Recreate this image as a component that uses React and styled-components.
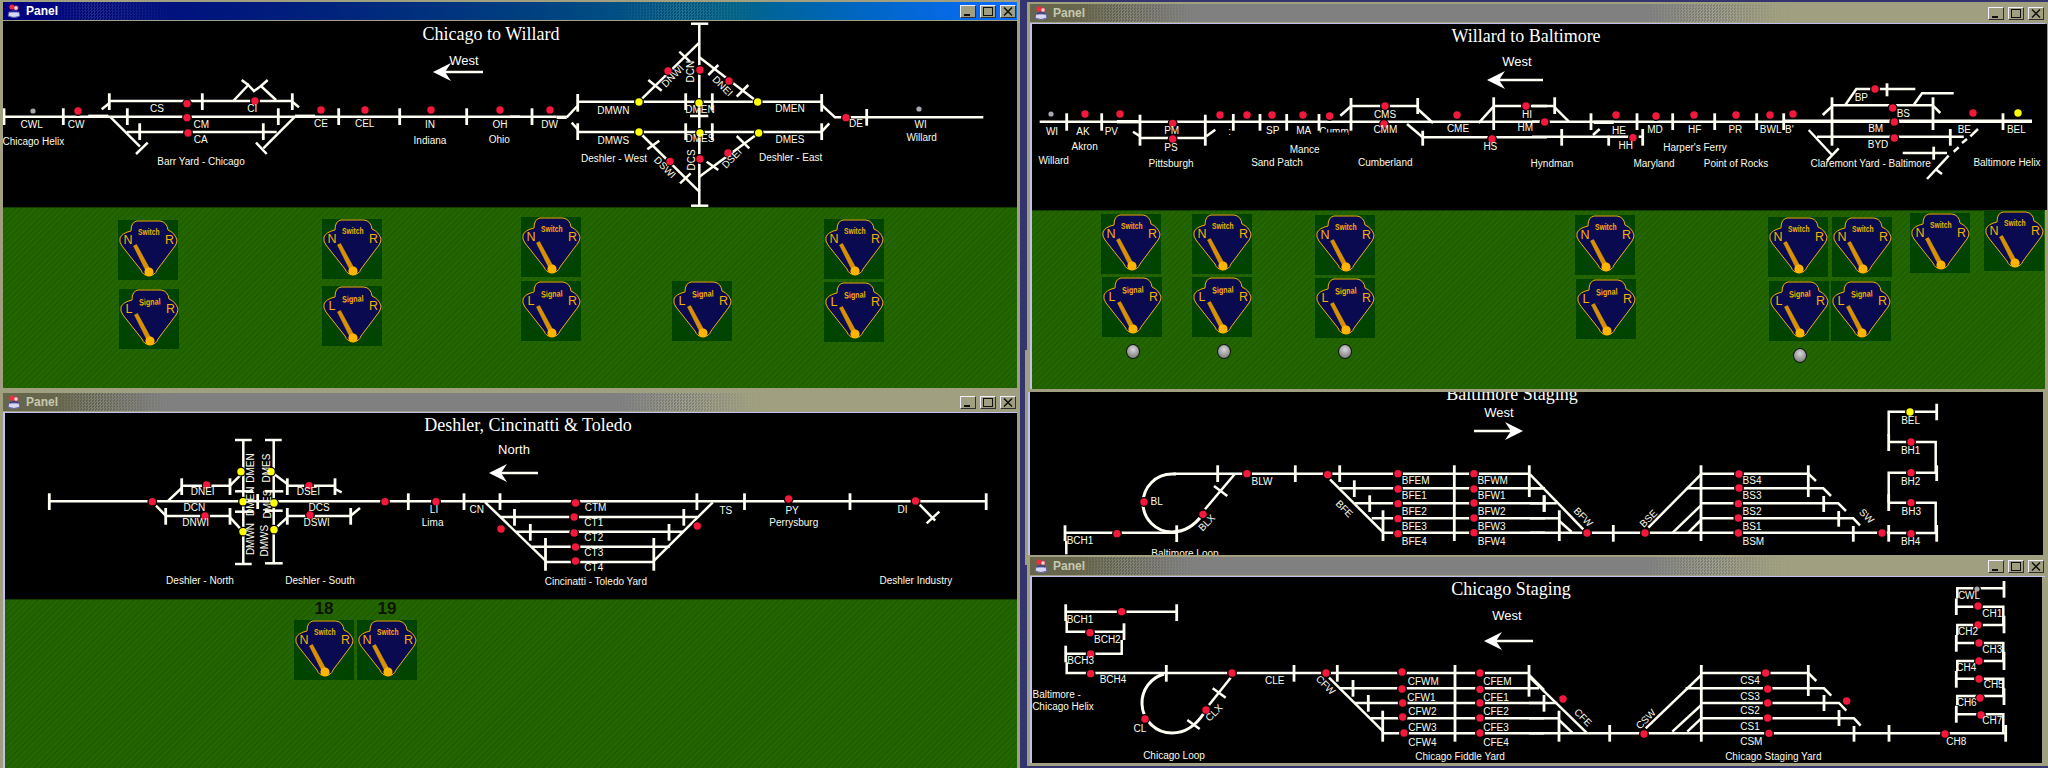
import React from 'react'
import styled, { createGlobalStyle } from 'styled-components'

const GlobalStyle = createGlobalStyle`
  html, body { margin: 0; padding: 0; background: #34346e; overflow: hidden; }
  #root { width: 2048px; height: 768px; }
`

const Desktop = styled.div`
  position: relative;
  width: 2048px;
  height: 768px;
  overflow: hidden;
  font-family: "Liberation Sans", Arial, sans-serif;
`

const Win = styled.section`
  position: absolute;
  left: ${p => p.$x}px;
  top: ${p => p.$y}px;
  width: ${p => p.$w}px;
  height: ${p => p.$h}px;
  z-index: ${p => p.$z};
  box-sizing: border-box;
  display: flex;
  flex-direction: column;
  background: #a0a080;
  border-style: solid;
  border-color: #a0a080;
  border-width: 2px 3px 3px 3px;
`

const TitleBar = styled.header`
  position: relative;
  flex: 0 0 18px;
  display: flex;
  align-items: center;
  gap: 4px;
  padding: 0 1px 0 3px;
  margin-bottom: 1px;
  font-size: 12px;
  font-weight: 700;
  color: ${p => (p.$active ? '#ffffff' : '#c8c8b0')};
  background: ${p => p.$active
    ? 'linear-gradient(90deg, #000080 0%, #00207c 30%, #004080 52%, #006488 72%, #0066c0 84%, #0a6cff 100%)'
    : 'linear-gradient(90deg, #66664c 0%, #66664c 5%, #808080 16%, #808080 61%, #a0a080 74%)'};

  /* the dithered bands of the old window manager */
  &::before {
    content: '';
    position: absolute;
    inset: 0;
    background: repeating-conic-gradient(rgba(255, 255, 255, 0.13) 0 25%, rgba(0, 0, 0, 0.13) 0 50%) 0 0 / 3px 3px;
    mask-image: linear-gradient(90deg, transparent 4%, #000 9%, transparent 17%, transparent 60%, #000 67%, transparent 75%);
  }

  & > * {
    position: relative;
  }
`

const TitleText = styled.span`
  flex: 1;
`

const WinButton = styled.button`
  width: 16px;
  height: 13px;
  padding: 0;
  display: flex;
  align-items: center;
  justify-content: center;
  box-sizing: border-box;
  background: #a0a080;
  border: 1px solid;
  border-color: #f0f0ff #303030 #303030 #f0f0ff;
`

const Body = styled.div`
  flex: 1;
  min-height: 0;
  display: flex;
  flex-direction: column;
  border-left: ${p => (p.$active ? 0 : 2)}px solid #c0c0f0;
  border-top: ${p => (p.$active ? 0 : 1)}px solid #c0c0f0;
`

const Canvas = styled.svg`
  display: block;
  flex: 0 0 auto;
  background: #000000;
`

const Field = styled.div`
  position: relative;
  flex: 1;
  min-height: 0;
  border-top: 1px solid #104000;
  background: repeating-linear-gradient(-45deg, #246600 0 2px, #1f5f00 2px 4px);
`

const LeverBox = styled.div`
  position: absolute;
  left: ${p => p.$x}px;
  top: ${p => p.$y}px;
  width: 60px;
  height: 60px;
  background: #004400;
`

const LeverTag = styled.span`
  position: absolute;
  left: 0;
  right: 0;
  top: -21px;
  text-align: center;
  font-size: 17px;
  font-weight: 700;
  color: #0c1400;
`

const Ball = styled.div`
  position: absolute;
  left: ${p => p.$x}px;
  top: ${p => p.$y}px;
  width: 14px;
  height: 15px;
  box-sizing: border-box;
  border-radius: 50%;
  border: 1px solid #101810;
  background: radial-gradient(circle at 50% 35%, #d8d8e0 0%, #9a9a9a 55%, #70706a 100%);
`

const LeverWord = styled.text`
  font-family: "Liberation Sans", Arial, sans-serif;
  font-weight: 700;
  font-size: 9px;
  fill: #f4b000;
`

const LeverLetter = styled.text`
  font-family: "Liberation Sans", Arial, sans-serif;
  font-size: 12.5px;
  fill: #f4b000;
`

const TrackLabel = styled.text`
  font-family: "Liberation Sans", Arial, sans-serif;
  font-size: 10px;
  fill: #fbfbea;
  text-anchor: middle;
`

const PanelTitle = styled.text`
  font-family: "Liberation Serif", "Times New Roman", serif;
  font-size: 18px;
  fill: #ffffff;
  text-anchor: middle;
`

const Direction = styled.text`
  font-family: "Liberation Sans", Arial, sans-serif;
  font-size: 13px;
  fill: #ffffff;
  text-anchor: middle;
`

const Track = styled.polyline`
  fill: none;
  stroke: #fffff4;
  stroke-width: ${p => p.$w};
`

const Curve = styled.path`
  fill: none;
  stroke: #fffff4;
  stroke-width: 3;
`

const Dot = styled.circle`
  fill: ${p => p.$c};
  stroke: #000000;
  stroke-width: 2.5;
  paint-order: stroke;
`

const dotColors = { y: '#ffff00', g: '#a8a8b0' }

// each section keeps the coordinates as read from one crop of the reference
const sections = {
  chicago: [
    {
      o: [0, 0],
      lines: [
        [10, 350, 1560, 350], [330, 303, 875, 303], [380, 396, 830, 396],
        [330, 350, 420, 440], [408, 462, 443, 428], [885, 350, 790, 445], [768, 428, 800, 462],
        [305, 328, 328, 310], [877, 305, 897, 322],
        [700, 303, 745, 255, 762, 273, 783, 258, 828, 300], [725, 240, 745, 255], [783, 258, 803, 240],
      ],
      heavy: [[265, 349, 325, 349], [885, 349, 945, 349]],
      ticks: [
        [12, 325, 375], [190, 325, 375], [328, 280, 330], [382, 325, 375], [419, 370, 420], [607, 280, 330],
        [835, 325, 375], [790, 370, 420], [877, 280, 330], [1016, 325, 375], [1199, 325, 375], [1400, 325, 375],
      ],
      dots: [
        [99, 333, 'g'], [234, 333], [561, 311], [765, 303], [561, 353], [564, 399],
        [963, 330], [1095, 330], [1293, 330], [1500, 330],
      ],
      labels: [
        ['CS', 471, 325], ['CM', 604, 373], ['CA', 602, 417], ['CI', 757, 325], ['CWL', 95, 373], ['CW', 228, 373],
        ['Chicago Helix', 100, 425], ['Barr Yard - Chicago', 603, 484], ['CE', 963, 371], ['CEL', 1094, 370],
        ['IN', 1290, 372], ['Indiana', 1290, 422], ['OH', 1500, 372], ['Ohio', 1498, 418],
      ],
    },
    {
      o: [510, 0],
      lines: [
        [0, 350, 140, 350], [170, 352, 205, 315], [203, 305, 935, 305], [203, 396, 935, 396], [185, 368, 205, 390],
        [935, 315, 975, 352, 1420, 352], [935, 395, 958, 370],
        [568, 70, 568, 617], [543, 71, 595, 71], [543, 617, 595, 617], [540, 348, 595, 348],
        [568, 128, 387, 305], [508, 155, 540, 185], [415, 240, 455, 272],
        [568, 172, 743, 306], [595, 225, 625, 195], [680, 290, 715, 255],
        [387, 396, 568, 575], [412, 448, 448, 422], [510, 550, 542, 520],
        [568, 530, 746, 399], [590, 485, 625, 510], [680, 408, 718, 445],
      ],
      heavy: [[140, 352, 170, 352]],
      ticks: [
        [66, 325, 375], [203, 282, 335], [203, 370, 420], [527, 280, 330], [607, 280, 330], [527, 370, 420],
        [607, 370, 420], [935, 282, 335], [935, 370, 420], [1070, 327, 377],
      ],
      dots: [
        [120, 330], [474, 213], [570, 210], [657, 243], [480, 484], [570, 477], [654, 459], [1008, 353],
        [387, 306, 'y'], [567, 309, 'y'], [743, 306, 'y'], [387, 396, 'y'], [570, 399, 'y'], [746, 399, 'y'],
        [1227, 327, 'g'],
      ],
      labels: [
        ['DW', 119, 373], ['DMWN', 310, 330], ['DMEN', 840, 326], ['DMWS', 310, 421], ['DMES', 840, 419],
        ['DMEN', 570, 328], ['DMES', 570, 416], ['Deshler - West', 312, 476], ['Deshler - East', 842, 472],
        ['WI', 1232, 373], ['Willard', 1235, 413], ['DE', 1038, 371],
        ['DNWI', 488, 228, -45], ['DCN', 543, 215, -90], ['DNEI', 638, 258, 45], ['DCS', 543, 480, -90],
        ['DSWI', 465, 502, 45], ['DSEI', 665, 475, -45],
      ],
    },
  ],
  willard: [
    {
      o: [1025, 0],
      lines: [
        [38, 368, 1560, 368], [339, 417, 535, 417], [318, 398, 339, 412], [538, 412, 565, 392],
        [972, 321, 1172, 321], [940, 350, 972, 322], [1172, 330, 1218, 372], [1140, 375, 1187, 415],
        [1187, 415, 1560, 415], [1400, 321, 1560, 321], [1355, 372, 1400, 322],
      ],
      heavy: [[270, 368, 335, 368]],
      ticks: [
        [119, 343, 395], [224, 343, 395], [339, 347, 440], [535, 347, 440], [619, 345, 395], [699, 345, 395],
        [779, 345, 395], [876, 345, 395], [972, 297, 395], [1172, 297, 345], [1187, 395, 440], [1400, 295, 393],
      ],
      dots: [
        [72, 345, 'g'], [174, 345], [279, 345], [437, 373], [437, 420], [579, 348], [660, 348], [735, 348], [828, 348],
        [908, 351], [1074, 321], [1071, 375], [1290, 348], [1497, 321], [1553, 369], [1395, 420],
      ],
      labels: [
        ['WI', 75, 398], ['AK', 168, 397], ['PV', 253, 397], ['Akron', 173, 443], ['Willard', 80, 485],
        ['PM', 434, 395], ['PS', 432, 444], ['Pittsburgh', 432, 492], [':', 608, 397], ['SP', 737, 393], ['MA', 830, 393],
        ['Mance', 833, 450], ['Sand Patch', 750, 491], ['Cumberland', 1075, 489], ['CMS', 1074, 347],
        ['CMM', 1075, 391], ['CME', 1293, 388], ['HI', 1500, 345], ['HS', 1390, 442],
      ],
    },
    {
      o: [1530, 0],
      lines: [
        [0, 321, 68, 321], [68, 325, 110, 367], [0, 368, 1500, 368], [0, 413, 290, 413], [320, 413, 332, 413],
        [183, 408, 203, 390], [900, 319, 1203, 319], [872, 348, 900, 322], [1203, 320, 1225, 342],
        [940, 318, 973, 270, 1150, 270], [1145, 318, 1170, 283, 1265, 283], [855, 413, 1295, 413],
        [830, 393, 900, 468], [885, 485, 920, 448], [1112, 462, 1245, 462],
        [1338, 390, 1315, 412], [1305, 420, 1290, 432], [1280, 445, 1265, 458], [1250, 470, 1185, 540],
        [1210, 510, 1230, 525],
      ],
      heavy: [[185, 370, 245, 370], [755, 367, 1080, 367], [1100, 367, 1500, 367]],
      ticks: [
        [68, 295, 345], [177, 343, 393], [315, 343, 393], [422, 343, 393], [548, 343, 393], [674, 343, 393],
        [755, 343, 393], [900, 295, 440], [1203, 295, 393], [1413, 343, 393], [89, 390, 440], [230, 410, 440],
        [332, 390, 440], [1065, 253, 292], [1255, 390, 440], [1205, 443, 482],
      ],
      dots: [
        [38, 369], [252, 348], [372, 351], [486, 348], [612, 348], [714, 348], [783, 345], [1087, 369], [1323, 342],
        [1458, 342, 'y'], [303, 416], [1082, 327], [1029, 270], [1087, 417],
      ],
      labels: [
        ['HM', -20, 385], ['HE', 261, 394], ['HH', 281, 438], ['MD', 369, 392], ['HF', 488, 392], ['PR', 610, 390],
        ['BWL', 716, 392], ["B'", 772, 390], ['BP', 988, 296], ['BS', 1114, 344], ['BM', 1031, 388],
        ['BYD', 1038, 436], ['BE', 1297, 390], ['BEL', 1453, 390], ["Harper's Ferry", 489, 445],
        ['Maryland', 366, 492], ['Point of Rocks', 612, 492], ['Hyndman', 60, 494],
        ['Claremont Yard - Baltimore', 1016, 493], ['Baltimore Helix', 1425, 491],
      ],
    },
  ],
  deshler: [
    {
      o: [0, 385],
      lines: [
        [148, 352, 1560, 352], [505, 350, 545, 312], [468, 365, 497, 395], [545, 305, 690, 305], [497, 396, 690, 396],
        [690, 305, 723, 272], [690, 400, 729, 443], [730, 168, 730, 540],
        [705, 168, 755, 168], [705, 540, 755, 540], [705, 322, 760, 322], [705, 383, 760, 383],
        [821, 168, 821, 540], [795, 168, 845, 168], [795, 538, 848, 538], [795, 322, 850, 322], [795, 380, 848, 380],
        [813, 263, 862, 300], [822, 437, 862, 400], [862, 305, 1005, 305], [862, 396, 1052, 396],
        [1005, 315, 1025, 325], [1052, 395, 1080, 372],
      ],
      heavy: [],
      ticks: [
        [148, 328, 378], [545, 283, 333], [690, 283, 333], [497, 372, 422], [690, 372, 422], [773, 330, 375],
        [862, 283, 333], [1005, 283, 333], [862, 372, 422], [1052, 372, 422], [1225, 328, 378], [1392, 328, 378],
      ],
      dots: [
        [457, 353], [1155, 353], [1308, 353], [620, 303], [615, 396], [927, 305], [930, 393],
        [723, 263, 'y'], [729, 353, 'y'], [729, 443, 'y'], [813, 263, 'y'], [822, 357, 'y'], [822, 437, 'y'],
      ],
      labels: [
        ['DNEI', 608, 323], ['DCN', 583, 370], ['DNWI', 587, 415], ['DSEI', 925, 323], ['DCS', 957, 370],
        ['DSWI', 950, 415], ['Deshler - North', 600, 588], ['Deshler - South', 960, 588],
        ['DMEN', 752, 252, -90], ['DMES', 800, 252, -90], ['DMEN', 752, 352, -90], ['DMES', 803, 360, -90],
        ['DMWN', 752, 465, -90], ['DMWS', 795, 470, -90],
        ['LI', 1302, 377], ['Lima', 1298, 415], ['CN', 1430, 377],
      ],
    },
    {
      o: [480, 385],
      s: 2.9,
      lines: [
        [0, 352, 1468, 352], [15, 355, 190, 530], [675, 355, 505, 530], [60, 399, 630, 399], [105, 443, 590, 443],
        [150, 488, 550, 488], [190, 534, 505, 534], [1275, 362, 1320, 410], [1295, 418, 1332, 383],
      ],
      heavy: [],
      ticks: [
        [58, 328, 378], [629, 328, 378], [767, 328, 378], [1073, 328, 378], [1468, 328, 378], [100, 375, 425],
        [591, 375, 425], [146, 420, 470], [548, 420, 470], [190, 462, 560], [504, 462, 560],
      ],
      dots: [
        [277, 357], [273, 399], [273, 447], [277, 489], [277, 531], [61, 435], [630, 426], [895, 345], [1263, 351],
      ],
      labels: [
        ['CTM', 335, 370], ['CT1', 330, 414], ['CT2', 330, 460], ['CT3', 330, 506], ['CT4', 330, 551], ['TS', 713, 380],
        ['PY', 905, 380], ['Perrysburg', 910, 415], ['DI', 1225, 376], ['Cincinatti - Toledo Yard', 336, 593],
        ['Deshler Industry', 1264, 589],
      ],
    },
  ],
  baltimore: [
    {
      o: [1025, 385],
      lines: [
        [445, 263, 1513, 263], [540, 370, 630, 263], [567, 300, 607, 330], [120, 440, 455, 440], [124, 465, 124, 505],
        [945, 307, 1560, 307], [990, 352, 1560, 352], [1040, 397, 1560, 397], [1075, 440, 1560, 440],
        [915, 280, 1075, 440],
      ],
      heavy: [],
      ticks: [
        [120, 418, 465], [455, 418, 468], [578, 238, 288], [811, 238, 288], [944, 238, 288], [988, 283, 333],
        [1034, 328, 378], [1074, 373, 465], [1288, 238, 465], [1513, 238, 333], [1558, 328, 378],
      ],
      dots: [
        [666, 263], [908, 266], [357, 348], [534, 385], [276, 443],
        [1119, 263], [1119, 309], [1119, 353], [1119, 398], [1119, 443],
        [1347, 263], [1347, 309], [1347, 351], [1347, 396], [1347, 440],
      ],
      labels: [
        ['BFEM', 1172, 284], ['BFE1', 1168, 329], ['BFE2', 1168, 375], ['BFE3', 1168, 420], ['BFE4', 1168, 466],
        ['BFWM', 1403, 284], ['BFW1', 1400, 329], ['BFW2', 1400, 375], ['BFW3', 1400, 420], ['BFW4', 1400, 466],
        ['BL', 395, 347], ['BLW', 711, 285], ['BCH1', 165, 463], ['BLX', 545, 410, -45], ['BFE', 958, 368, 45],
        ['Baltimore Loop', 480, 503],
      ],
    },
    {
      o: [1530, 385],
      lines: [
        [0, 265, 160, 430], [0, 307, 40, 307], [0, 352, 80, 352], [0, 397, 88, 397], [88, 405, 125, 438], [0, 440, 1076, 440],
        [513, 263, 835, 263, 858, 285], [470, 307, 880, 307, 903, 330], [513, 352, 925, 352, 948, 375],
        [513, 397, 970, 397, 990, 418], [355, 425, 513, 265], [428, 440, 513, 358], [475, 440, 513, 402],
        [1076, 150, 1076, 77, 1220, 77], [1076, 168, 1217, 168, 1217, 260], [1076, 350, 1076, 260, 1220, 260],
        [1076, 350, 1217, 350, 1217, 440], [1076, 441, 1220, 441],
      ],
      heavy: [],
      ticks: [
        [42, 328, 378], [88, 373, 465], [250, 417, 467], [513, 238, 465], [835, 238, 333], [881, 330, 378], [926, 375, 422],
        [970, 420, 467], [1076, 145, 195], [1076, 325, 375], [1076, 417, 467], [1220, 53, 103], [1220, 238, 285], [1220, 417, 467],
      ],
      dots: [
        [171, 441], [345, 441], [1056, 441], [627, 264], [627, 306], [625, 353], [625, 396], [625, 441],
        [1140, 78, 'y'], [1143, 168], [1143, 260], [1143, 350], [1143, 443],
      ],
      labels: [
        ['BS4', 666, 284], ['BS3', 666, 329], ['BS2', 666, 375], ['BS1', 666, 420], ['BSM', 670, 466],
        ['BFW', 160, 393, 45], ['BSE', 355, 397, -45], ['SW', 1010, 390, 45],
        ['BEL', 1142, 103], ['BH1', 1142, 192], ['BH2', 1142, 285], ['BH3', 1144, 377], ['BH4', 1142, 466],
      ],
    },
  ],
  staging: [
    {
      o: [1025, 555],
      lines: [
        [125, 170, 458, 170], [128, 198, 128, 230, 300, 230], [293, 255, 293, 296, 125, 296], [128, 322, 128, 354, 1515, 354],
        [915, 368, 1078, 530], [945, 400, 1545, 400], [990, 444, 1560, 444], [1040, 490, 1560, 490], [1076, 535, 1560, 535],
        [1515, 360, 1560, 405], [555, 450, 620, 368], [566, 400, 605, 428], [490, 495, 527, 522],
      ],
      heavy: [],
      ticks: [
        [125, 148, 198], [458, 148, 198], [300, 205, 255], [125, 272, 322], [427, 330, 380], [810, 330, 380], [940, 330, 380],
        [987, 375, 425], [1033, 420, 470], [1076, 467, 560], [1293, 330, 560],
      ],
      dots: [
        [293, 170], [198, 233], [200, 297], [200, 356], [624, 354], [906, 354], [363, 492], [546, 465],
        [1134, 351], [1134, 402], [1136, 444], [1136, 486], [1140, 534],
        [1368, 354], [1368, 403], [1368, 444], [1368, 489], [1368, 534],
      ],
      labels: [
        ['BCH1', 168, 193], ['BCH2', 250, 252], ['BCH3', 170, 316], ['BCH4', 267, 373], ['Baltimore -', 98, 418],
        ['Chicago Helix', 117, 454], ['CL', 348, 521], ['Chicago Loop', 450, 600], ['CLE', 752, 376],
        ['CFW', 905, 390, 45], ['CLX', 570, 473, -45], ['CFWM', 1198, 380], ['CFW1', 1192, 426], ['CFW2', 1195, 470],
        ['CFW3', 1195, 516], ['CFW4', 1195, 562], ['CFEM', 1420, 380], ['CFE1', 1416, 426], ['CFE2', 1416, 470],
        ['CFE3', 1416, 516], ['CFE4', 1416, 562], ['Chicago Fiddle Yard', 1308, 604],
      ],
    },
    {
      o: [1530, 555],
      lines: [
        [0, 365, 175, 535], [0, 444, 85, 444], [0, 490, 90, 490], [90, 495, 130, 533], [0, 535, 1430, 535],
        [517, 354, 838, 354, 862, 378], [470, 400, 885, 400, 907, 422], [517, 444, 930, 444, 952, 467],
        [517, 490, 975, 490, 995, 512], [350, 520, 517, 360], [430, 530, 517, 450], [475, 530, 517, 490],
        [1285, 130, 1285, 100, 1425, 100], [1282, 155, 1423, 155, 1423, 208], [1285, 240, 1285, 210, 1425, 210],
        [1282, 264, 1423, 264, 1423, 318], [1285, 348, 1285, 318, 1425, 318], [1282, 371, 1423, 371, 1423, 425],
        [1285, 450, 1285, 423, 1425, 423], [1282, 478, 1423, 478, 1423, 535],
      ],
      heavy: [],
      ticks: [
        [0, 330, 425], [45, 420, 470], [90, 467, 560], [242, 510, 560], [517, 330, 560], [838, 330, 423], [885, 420, 468],
        [930, 465, 513], [975, 513, 560], [1080, 510, 560], [1430, 510, 560], [1425, 78, 128], [1282, 130, 180],
        [1425, 182, 235], [1282, 240, 290], [1425, 290, 345], [1282, 348, 398], [1425, 400, 450], [1282, 452, 503],
      ],
      dots: [
        [102, 432], [345, 537], [720, 535], [1248, 537], [710, 354], [716, 402], [716, 444], [716, 489], [953, 438],
        [1344, 102, 'g'], [1347, 153], [1347, 210], [1350, 264], [1350, 318], [1350, 372], [1353, 429], [1356, 480],
      ],
      labels: [
        ['CS4', 663, 377], ['CS3', 663, 423], ['CS2', 663, 467], ['CS1', 663, 513], ['CSM', 667, 558],
        ['Chicago Staging Yard', 733, 604], ['CFE', 162, 487, 45], ['CSW', 350, 492, -45], ['CH8', 1282, 560],
        ['CWL', 1320, 122], ['CH1', 1390, 176], ['CH2', 1317, 229], ['CH3', 1390, 283], ['CH4', 1312, 336],
        ['CH5', 1394, 389], ['CH6', 1313, 442], ['CH7', 1390, 497],
      ],
    },
  ],
}

const curves = {
  baltimore: ['M1176 473 H1172 A29 29 0 0 0 1143 502 A29 29 0 0 0 1172 531 Q1190 531 1203 513'],
  staging: ['M1165 674 A30 30 0 0 0 1143 704 A30 30 0 0 0 1173 733 Q1192 733 1205 713'],
}

function Section({ data }) {
  const [ox, oy] = data.o
  const sx = data.s || 3
  const gx = x => ox + x / sx
  const gy = y => oy + y / 3
  const toPoints = pts => pts.map((v, i) => (i % 2 ? gy(v) : gx(v)).toFixed(1)).join(' ')
  return (
    <>
      {data.lines.map((l, i) => <Track key={i} $w={2.5} points={toPoints(l)} />)}
      {data.heavy.map((l, i) => <Track key={i} $w={3.4} points={toPoints(l)} />)}
      {data.ticks.map(([x, a, b], i) => <Track key={i} $w={2.8} points={toPoints([x, a, x, b])} />)}
    </>
  )
}

function Marks({ data }) {
  const [ox, oy] = data.o
  const sx = data.s || 3
  return (
    <>
      {data.dots.map(([x, y, c], i) => (
        <Dot key={i} cx={ox + x / sx} cy={oy + y / 3} r={c === 'g' ? 2.6 : 3.7} $c={dotColors[c] || '#f4193c'} />
      ))}
      {data.labels.map(([t, x, y, rot], i) => {
        const lx = ox + x / sx
        const ly = oy + y / 3
        return (
          <TrackLabel key={i} x={lx} y={ly + 3.5} transform={rot ? `rotate(${rot} ${lx} ${ly})` : undefined}>{t}</TrackLabel>
        )
      })}
    </>
  )
}

function Arrow({ tip, tail, y }) {
  const d = tail > tip ? 1 : -1
  return (
    <>
      <Track $w={2.5} points={`${tip + d * 6},${y} ${tail},${y}`} />
      <path
        fill="#ffffff"
        d={`M${tip} ${y} L${tip + d * 18} ${y - 9} L${tip + d * 12} ${y} L${tip + d * 18} ${y + 9} Z`}
      />
    </>
  )
}

function Diagram({ view, name, title, dir, arrow, children }) {
  const [x, y, w, h] = view
  return (
    <Canvas width={w} height={h} viewBox={`${x} ${y} ${w} ${h}`}>
      <PanelTitle x={title[1]} y={title[2]}>{title[0]}</PanelTitle>
      <Direction x={dir[1]} y={dir[2]}>{dir[0]}</Direction>
      <Arrow tip={arrow[0]} tail={arrow[1]} y={arrow[2]} />
      {sections[name].map((s, i) => <Section key={i} data={s} />)}
      {(curves[name] || []).map((d, i) => <Curve key={i} d={d} />)}
      {sections[name].map((s, i) => <Marks key={i} data={s} />)}
      {children}
    </Canvas>
  )
}

function Lever({ x, y, word = 'Switch', left = 'N', tag }) {
  const signal = word === 'Signal'
  return (
    <LeverBox $x={x} $y={y}>
      {tag && <LeverTag>{tag}</LeverTag>}
      <svg width="60" height="60" viewBox="0 0 60 60">
        <path
          d="M19 1 H42 Q49 2 50 10 Q57 13 59 20 Q59 23 57 26 L39 50 A8.5 8.5 0 0 1 23 50 L4 26 Q1 22 2 18 Q4 13 13 11 Q13 2 19 1 Z"
          fill="#0a0a50"
          stroke="#f4b000"
          strokeWidth="1"
        />
        <polygon points="15.5,26 18.5,24.5 33,51 29,53" fill="#d89000" stroke="#f0a800" strokeWidth="0.5" />
        <circle cx="31" cy="52" r="4.6" fill="#ffb400" />
        <LeverWord
          x="20"
          y={signal ? 16 : 15}
          textLength="21.5"
          lengthAdjust="spacingAndGlyphs"
          transform={signal ? 'rotate(-3 31 12)' : undefined}
        >
          {word}
        </LeverWord>
        <LeverLetter x="10" y="24" textAnchor="middle">{left}</LeverLetter>
        <LeverLetter x="51.5" y="24" textAnchor="middle">R</LeverLetter>
      </svg>
    </LeverBox>
  )
}

function JavaIcon() {
  return (
    <svg width="16" height="16" viewBox="0 0 16 16">
      <path d="M2 13 Q8 16 14 13 L13 9 H3 Z" fill="#d8d8f0" stroke="#5050a0" strokeWidth="0.8" />
      <circle cx="6" cy="4" r="2.6" fill="#f03040" />
      <circle cx="10" cy="5" r="2.2" fill="#f8d8d8" stroke="#d02040" strokeWidth="0.7" />
      <path d="M4 9 Q8 6 12 9" stroke="#3030a0" strokeWidth="1.2" fill="none" />
    </svg>
  )
}

function Controls() {
  return (
    <>
      <WinButton aria-label="minimize">
        <svg width="10" height="9" viewBox="0 0 10 9"><rect x="1" y="7" width="6" height="2" fill="#101010" /></svg>
      </WinButton>
      <WinButton aria-label="maximize">
        <svg width="10" height="9" viewBox="0 0 10 9"><rect x="0.5" y="0.5" width="9" height="8" fill="none" stroke="#101010" /></svg>
      </WinButton>
      <WinButton aria-label="close">
        <svg width="10" height="9" viewBox="0 0 10 9"><path d="M1 0.5 L9 8.5 M9 0.5 L1 8.5" stroke="#101010" strokeWidth="1.5" /></svg>
      </WinButton>
    </>
  )
}

function Panel({ x, y, w, h, z, active, children }) {
  return (
    <Win $x={x} $y={y} $w={w} $h={h} $z={z}>
      <TitleBar $active={active}>
        <JavaIcon />
        <TitleText>Panel</TitleText>
        <Controls />
      </TitleBar>
      <Body $active={active}>{children}</Body>
    </Win>
  )
}

// positions below are page coordinates, the field's own origin is taken off
const willardLevers = [
  [1099, 214], [1190, 214], [1313, 215], [1573, 215], [1766, 217], [1830, 217], [1908, 213], [1982, 211],
]
const willardSignals = [[1100, 277], [1190, 277], [1313, 278], [1574, 279], [1767, 281], [1829, 281]]
const willardBalls = [[1124, 344], [1215, 344], [1336, 344], [1791, 348]]

export default function App() {
  return (
    <Desktop>
      <GlobalStyle />
      <Panel x={0} y={0} w={1020} h={391} z={2} active>
        <Diagram
          name="chicago"
          view={[3, 21, 1014, 186]}
          title={['Chicago to Willard', 491, 40]}
          dir={['West', 464, 65]}
          arrow={[433, 483, 72]}
        />
        <Field>
          <Lever x={115} y={12} />
          <Lever x={319} y={11} />
          <Lever x={518} y={9} />
          <Lever x={821} y={11} />
          <Lever x={116} y={81} word="Signal" left="L" />
          <Lever x={319} y={78} word="Signal" left="L" />
          <Lever x={518} y={73} word="Signal" left="L" />
          <Lever x={669} y={73} word="Signal" left="L" />
          <Lever x={821} y={74} word="Signal" left="L" />
        </Field>
      </Panel>

      <Panel x={0} y={391} w={1020} h={380} z={2}>
        <Diagram
          name="deshler"
          view={[5, 414, 1012, 186]}
          title={['Deshler, Cincinatti & Toledo', 528, 432]}
          dir={['North', 514, 455]}
          arrow={[489, 538, 474]}
        />
        <Field>
          <Lever x={289} y={20} tag="18" />
          <Lever x={352} y={20} tag="19" />
        </Field>
      </Panel>

      <Panel x={1027} y={2} w={1021} h={390} z={3}>
        <Diagram
          name="willard"
          view={[1030, 25, 1015, 186]}
          title={['Willard to Baltimore', 1524, 43]}
          dir={['West', 1515, 67]}
          arrow={[1485, 1541, 81]}
        >
          {/* this label is half hidden behind a sensor in the reference */}
          <TrackLabel x={1332} y={136}>Cumm</TrackLabel>
          <rect x={1318} y={133.5} width={28} height={5} fill="#000000" />
        </Diagram>
        <Field>
          {willardLevers.map(([x, y]) => <Lever key={x} x={x - 1030} y={y - 211} />)}
          {willardSignals.map(([x, y]) => <Lever key={x} x={x - 1030} y={y - 211} word="Signal" left="L" />)}
          {willardBalls.map(([x, y]) => <Ball key={x} $x={x - 1030} $y={y - 211} />)}
        </Field>
      </Panel>

      <Panel x={1025} y={350} w={1023} h={215} z={1}>
        <Diagram
          name="baltimore"
          view={[1030, 371, 1013, 200]}
          title={['Baltimore Staging', 1512, 399]}
          dir={['West', 1499, 416]}
          arrow={[1523, 1474, 430]}
        />
      </Panel>

      <Panel x={1027} y={555} w={1021} h={211} z={4}>
        <Diagram
          name="staging"
          view={[1033, 577, 1010, 186]}
          title={['Chicago Staging', 1512, 595]}
          dir={['West', 1508, 620]}
          arrow={[1485, 1534, 641]}
        />
      </Panel>
    </Desktop>
  )
}
